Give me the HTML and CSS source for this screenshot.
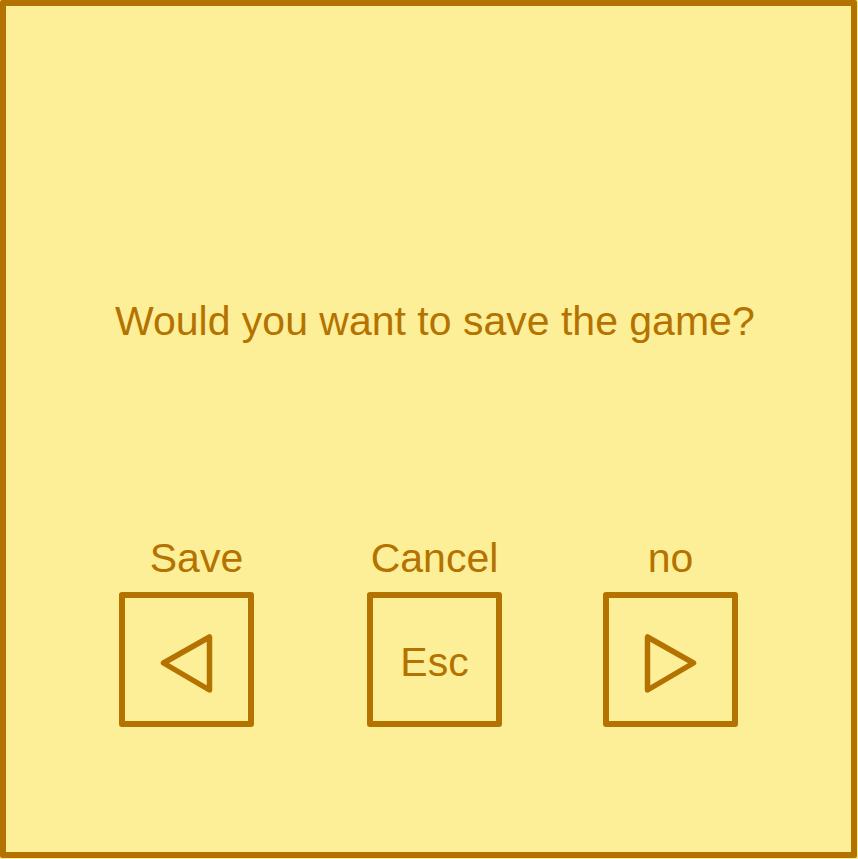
FILE: index.html
```html
<!DOCTYPE html>
<html>
<head>
<meta charset="utf-8">
<link rel="stylesheet" href="styles.css">
</head>
<body>
<div class="dialog">
  <p class="question">Would you want to save the game?</p>
  <div class="choices">
    <div class="choice choice-save">
      <div class="label">Save</div>
      <div class="key">
        <svg class="arrow" width="122" height="122" viewBox="0 0 122 122"><polygon points="37.5,64 83.5,38 83.5,91" /></svg>
      </div>
    </div>
    <div class="choice choice-cancel">
      <div class="label">Cancel</div>
      <div class="key"><span class="key-text">Esc</span></div>
    </div>
    <div class="choice choice-no">
      <div class="label">no</div>
      <div class="key">
        <svg class="arrow" width="122" height="122" viewBox="0 0 122 122"><polygon points="37.5,38 37.5,91 83.5,64" /></svg>
      </div>
    </div>
  </div>
</div>
</body>
</html>
```

FILE: styles.css
```css
html, body {
  margin: 0;
  padding: 0;
  background: #fdef97;
}

.dialog {
  box-sizing: border-box;
  width: 857px;
  height: 858px;
  border: 6px solid #b47300;
  border-radius: 2px;
  background: #fdef97;
  color: #b47300;
  font-family: "Liberation Sans", Arial, sans-serif;
  display: flex;
  flex-direction: column;
}

.question {
  margin: 291px 0 0 109px;
  font-size: 41px;
  line-height: 48px;
  white-space: nowrap;
}

.choices {
  display: flex;
  margin-top: 190px;
  padding-left: 113px;
}

.choice {
  width: 135px;
  display: flex;
  flex-direction: column;
  align-items: center;
}

.choice-cancel {
  margin-left: 113px;
}

.choice-no {
  margin-left: 101px;
}

.label {
  font-size: 41px;
  line-height: 46px;
  white-space: nowrap;
}

.choice-save .label {
  padding-left: 20px;
}

.key {
  box-sizing: border-box;
  margin-top: 11px;
  width: 135px;
  height: 135px;
  border: 6px solid #b47300;
  border-radius: 3px;
  display: flex;
  align-items: center;
  justify-content: center;
}

.arrow {
  display: block;
}

.arrow polygon {
  fill: none;
  stroke: #b47300;
  stroke-width: 5.5;
  stroke-linejoin: round;
}

.key-text {
  font-size: 41px;
  line-height: 46px;
  position: relative;
  top: 2px;
}
```
